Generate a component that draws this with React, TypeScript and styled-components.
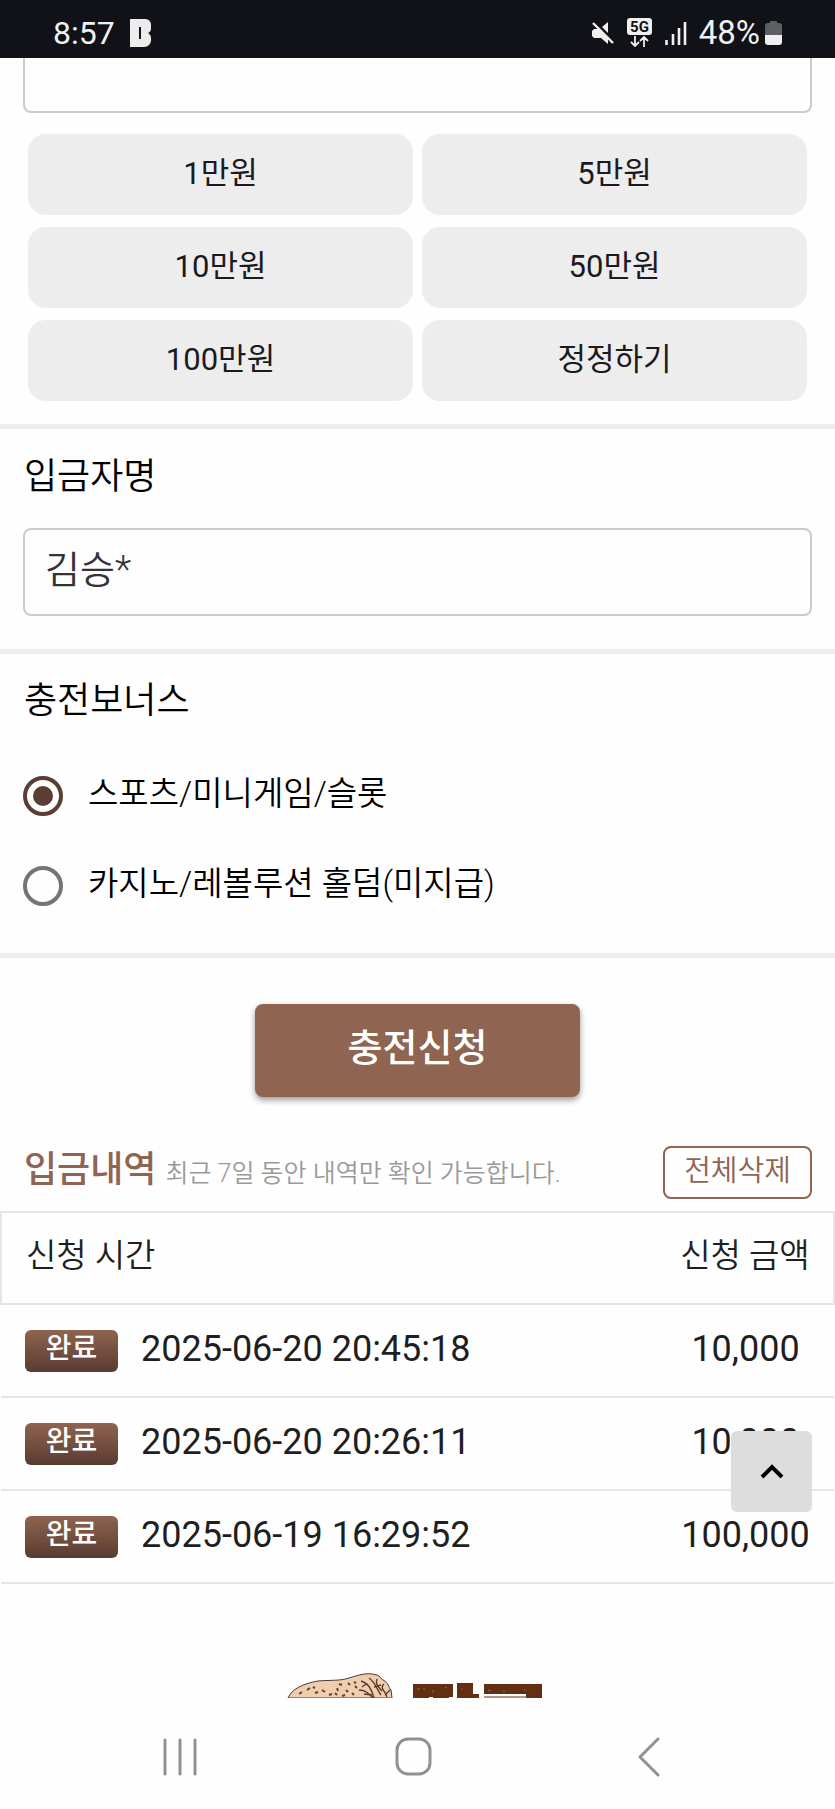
import React from "react";
import styled, { createGlobalStyle } from "styled-components";

const brown = "#8f6450";
const line = "#e5e5e5";

const GlobalStyle = createGlobalStyle`
  * { box-sizing: border-box; }
  body {
    margin: 0;
    background: #fefefe;
    color: #000;
    font-family: Roboto, "Noto Sans CJK KR", sans-serif;
    font-weight: 350;
  }
  button, input { font: inherit; }
  button { cursor: pointer; }
`;

const Page = styled.div`
  display: flex;
  flex-direction: column;
  min-height: 100vh;
`;

const StatusBar = styled.header`
  display: flex;
  align-items: center;
  justify-content: space-between;
  height: 58px;
  padding: 8px 53px 0;
  background: #111217;
  color: #f0f0f0;
  font-size: 32px;
  font-weight: 400;
  line-height: 40px;
`;

const StatusGroup = styled.div<{ $gap: number }>`
  display: flex;
  align-items: center;
  gap: ${(p) => p.$gap}px;
`;

const BatteryLevel = styled.div`
  display: flex;
  align-items: center;
  gap: 5px;
  font-size: 33px;
`;

const Section = styled.section`
  padding: 0 23px;
  border-bottom: 5px solid #ececec;
`;

const AmountSection = styled(Section)`
  padding-bottom: 23px;
`;

const NameSection = styled(Section)`
  padding-bottom: 33px;
`;

const BonusSection = styled(Section)`
  padding-bottom: 22px;
`;

const TextBox = styled.input`
  display: block;
  width: 100%;
  height: 88px;
  padding: 0 20px 12px;
  border: 2px solid #cbcbcb;
  border-radius: 8px;
  background: #fefefe;
  color: #333;
  font-size: 38px;
  outline: none;
`;

const AmountBox = styled(TextBox)`
  height: 55px;
  border-top: 0;
  border-radius: 0 0 8px 8px;
`;

const AmountGrid = styled.div`
  display: grid;
  grid-template-columns: 1fr 1fr;
  gap: 12px 9px;
  padding: 21px 5px 0;
`;

const AmountButton = styled.button`
  height: 81px;
  padding: 0 0 8px;
  border: 0;
  border-radius: 18px;
  background: #ededed;
  color: #1b1b1f;
  font-size: 31px;
  font-weight: 400;
`;

const Label = styled.label`
  display: block;
  padding: 23px 1px 26px;
  font-size: 36px;
  line-height: 50px;
`;

const BonusFields = styled.fieldset`
  margin: 0;
  padding: 0;
  border: 0;
`;

const BonusTitle = styled.legend`
  padding: 22px 1px 25px;
  font-size: 36px;
  line-height: 50px;
`;

const Option = styled.label`
  display: flex;
  align-items: center;
  gap: 25px;
  height: 90px;
  font-size: 33px;
`;

const OptionText = styled.span`
  padding-bottom: 10px;
`;

const Radio = styled.input`
  appearance: none;
  flex: none;
  display: grid;
  place-items: center;
  width: 40px;
  height: 40px;
  margin: 0;
  border: 4px solid #757575;
  border-radius: 50%;

  &:checked { border-color: #5a3d33; }
  &:checked::before {
    content: "";
    width: 20px;
    height: 20px;
    border-radius: 50%;
    background: #5a3d33;
  }
`;

const SubmitRow = styled.div`
  display: flex;
  justify-content: center;
  padding: 46px 0 49px;
`;

const SubmitButton = styled.button`
  width: 325px;
  height: 93px;
  padding: 0 0 12px;
  border: 0;
  border-radius: 8px;
  background: ${brown};
  box-shadow: 0 3px 6px rgba(0, 0, 0, 0.4);
  color: #fff;
  font-size: 38px;
  font-weight: 500;
`;

const HistoryHead = styled.div`
  display: flex;
  align-items: center;
  justify-content: space-between;
  padding: 0 23px 12px 24px;
`;

const HistoryTitle = styled.div`
  display: flex;
  align-items: baseline;
  gap: 9px;
  padding-bottom: 6px;
`;

const Heading = styled.h2`
  margin: 0;
  color: ${brown};
  font-size: 36px;
  font-weight: 500;
  line-height: 44px;
`;

const Note = styled.span`
  color: #999;
  font-size: 25px;
`;

const ClearButton = styled.button`
  width: 149px;
  height: 53px;
  padding: 0 0 4px;
  border: 2px solid ${brown};
  border-radius: 8px;
  background: #fefefe;
  color: ${brown};
  font-size: 29px;
  line-height: 40px;
`;

const HistoryArea = styled.div`
  position: relative;
`;

const HistoryTable = styled.table`
  width: 100%;
  border-collapse: collapse;
  color: #1f1f1f;
`;

const HeadRow = styled.tr`
  height: 92px;
  border: 2px solid ${line};
`;

const Row = styled.tr`
  height: 93px;
  border-bottom: 2px solid ${line};
`;

const HeadCell = styled.th<{ $amount?: boolean }>`
  width: ${(p) => (p.$amount ? "177px" : "auto")};
  padding: 0 0 10px ${(p) => (p.$amount ? "0" : "24px")};
  font-size: 33px;
  font-weight: 350;
  text-align: ${(p) => (p.$amount ? "center" : "left")};
`;

const TimeCell = styled.td`
  padding: 0 0 0 24px;
`;

const TimeLine = styled.div`
  display: flex;
  align-items: center;
  gap: 23px;
`;

const Time = styled.time`
  padding-bottom: 4px;
  font-size: 36px;
  font-weight: 400;
`;

const AmountCell = styled.td`
  padding: 0 0 4px;
  font-size: 36px;
  font-weight: 400;
  text-align: center;
`;

const Badge = styled.span`
  width: 93px;
  height: 42px;
  border-radius: 6px;
  background: linear-gradient(${brown}, #593b31);
  color: #fff;
  font-size: 28px;
  font-weight: 500;
  line-height: 38px;
  text-align: center;
`;

const TopButton = styled.button`
  position: absolute;
  right: 23px;
  bottom: 72px;
  display: grid;
  place-items: center;
  width: 81px;
  height: 81px;
  padding: 0;
  border: 0;
  border-radius: 6px;
  background: #ddd;
`;

const Footer = styled.footer`
  display: flex;
  align-items: flex-end;
  justify-content: center;
  gap: 20px;
  padding: 89px 6px 0 0;
`;

const NavBar = styled.nav`
  display: flex;
  justify-content: space-around;
  padding: 35px 69px 35px 63px;
`;

const NavButton = styled.button`
  display: grid;
  place-items: center;
  width: 60px;
  height: 48px;
  padding: 0;
  border: 0;
  background: none;
`;

const AppIcon = () => (
  <svg width="22" height="29" viewBox="0 0 22 29" aria-hidden="true">
    <path
      fill="#ececec"
      fillRule="evenodd"
      d="M0 0h15c4 0 6 3 6 6v3c0 3-1 4-3 5 2 1 3 3 3 5v2c0 4-3 7-7 7H0zM9 8v12h2V8z"
    />
  </svg>
);

const MuteIcon = () => (
  <svg width="24" height="24" viewBox="0 0 24 24" aria-hidden="true">
    <path fill="#f0f0f0" d="M17 1v11l-6-6z" />
    <path fill="#f0f0f0" d="M1 10l2-2h5l9 9v6l-7-6H3l-2-2z" />
    <path d="M2 2l20 20" stroke="#f0f0f0" strokeWidth="2.4" />
  </svg>
);

const NetworkIcon = () => (
  <svg width="26" height="30" viewBox="0 0 26 30" aria-hidden="true">
    <rect width="25" height="17" rx="3" fill="#f0f0f0" />
    <text x="12.5" y="14" textAnchor="middle" fontFamily="Roboto" fontSize="15" fontWeight="700" fill="#111217">
      5G
    </text>
    <path d="M8 18v10M4 24l4 4 4-4M17 29V19M13 23l4-4 4 4" fill="none" stroke="#f0f0f0" strokeWidth="1.8" />
  </svg>
);

const SignalIcon = () => (
  <svg width="22" height="23" viewBox="0 0 22 23" aria-hidden="true">
    <path d="M1.500 18v5M8 12v11M14 6v17M20 0v23" stroke="#f0f0f0" strokeWidth="2.6" />
  </svg>
);

const BatteryIcon = () => (
  <svg width="17" height="24" viewBox="0 0 17 24" aria-hidden="true">
    <path fill="#5e5f63" d="M5 0h7v2h2c2 0 3 1 3 3v10H0V5c0-2 1-3 3-3h2z" />
    <path fill="#f0f0f0" d="M0 14h17v7c0 2-1 3-3 3H3c-2 0-3-1-3-3z" />
  </svg>
);

const MascotArt = () => (
  <svg width="106" height="25" viewBox="0 0 106 25" aria-hidden="true">
    <path
      d="M1 25C5 16 15 11 31 8c10-1 23 0 31-3C72 2 80-1 90 2c3 1 4 4 6 5 6 3 5 7 8 10l1 8z"
      fill="#efceb0"
      stroke="#4a3a30"
      strokeWidth="1"
    />
    <path
      d="M20 17l3-2M28 20l3-1M35 17l3 2M42 22l3-1M26 14l2 1M50 15l1 3M52 11l3 1M59 17l2 2M61 10l2 2M68 13l2 2M67 9l2 1M55 23l3-1M12 21l3-2M48 20l2 2M65 20l2 2"
      stroke="#6b4029"
      strokeWidth="2"
    />
    <path
      d="M74 8c7 2 10 7 13 17M82 5c7 5 8 12 12 17M72 17c7 0 10 4 14 8M90 6c-2 6 2 8 5 12M97 11c-5 4 2 8 3 13M79 11l-4 3M87 14l7-2M77 21l8 1M103 17l-5 5"
      fill="none"
      stroke="#5a3a2b"
      strokeWidth="1.4"
    />
  </svg>
);

const WordmarkArt = () => (
  <svg width="129" height="15" viewBox="0 0 129 15" aria-hidden="true">
    <path
      d="M0 1h40v13h-4v1H20v-1h-4v1H0zM44 0h16v11h6v4H44zM71 1h58v14h-16v-4H71z"
      fill="#632f13"
    />
    <path d="M71 14h42" stroke="#632f13" strokeWidth="1" />
    <path d="M4 6h3M11 5v2M20 7v3M32 4l2 1M48 6h2M75 7l3 1M91 7v2M111 7h2" stroke="#b98462" strokeWidth="0.6" />
  </svg>
);

const presets = ["1만원", "5만원", "10만원", "50만원", "100만원", "정정하기"];
const bonuses = ["스포츠/미니게임/슬롯", "카지노/레볼루션 홀덤(미지급)"];
const deposits = [
  { time: "2025-06-20 20:45:18", amount: "10,000" },
  { time: "2025-06-20 20:26:11", amount: "10,000" },
  { time: "2025-06-19 16:29:52", amount: "100,000" },
];

export default function App() {
  return (
    <Page lang="ko">
      <GlobalStyle />
      <StatusBar>
        <StatusGroup $gap={15}>
          <span>8:57</span>
          <AppIcon />
        </StatusGroup>
        <StatusGroup $gap={12}>
          <MuteIcon />
          <NetworkIcon />
          <SignalIcon />
          <BatteryLevel>
            <span>48%</span>
            <BatteryIcon />
          </BatteryLevel>
        </StatusGroup>
      </StatusBar>

      <AmountSection>
        <AmountBox aria-label="충전금액" />
        <AmountGrid>
          {presets.map((p) => (
            <AmountButton key={p} type="button">{p}</AmountButton>
          ))}
        </AmountGrid>
      </AmountSection>

      <NameSection>
        <Label htmlFor="depositor">입금자명</Label>
        <TextBox id="depositor" defaultValue="김승*" />
      </NameSection>

      <BonusSection>
        <BonusFields>
          <BonusTitle>충전보너스</BonusTitle>
          {bonuses.map((b, i) => (
            <Option key={b}>
              <Radio type="radio" name="bonus" defaultChecked={i === 0} />
              <OptionText>{b}</OptionText>
            </Option>
          ))}
        </BonusFields>
      </BonusSection>

      <SubmitRow>
        <SubmitButton type="button">충전신청</SubmitButton>
      </SubmitRow>

      <HistoryHead>
        <HistoryTitle>
          <Heading>입금내역</Heading>
          <Note>최근 7일 동안 내역만 확인 가능합니다.</Note>
        </HistoryTitle>
        <ClearButton type="button">전체삭제</ClearButton>
      </HistoryHead>

      <HistoryArea>
        <HistoryTable>
          <thead>
            <HeadRow>
              <HeadCell scope="col">신청 시간</HeadCell>
              <HeadCell scope="col" $amount>신청 금액</HeadCell>
            </HeadRow>
          </thead>
          <tbody>
            {deposits.map((d) => (
              <Row key={d.time}>
                <TimeCell>
                  <TimeLine>
                    <Badge>완료</Badge>
                    <Time>{d.time}</Time>
                  </TimeLine>
                </TimeCell>
                <AmountCell>{d.amount}</AmountCell>
              </Row>
            ))}
          </tbody>
        </HistoryTable>
        <TopButton type="button" aria-label="맨 위로">
          <svg width="24" height="16" viewBox="0 0 24 16" aria-hidden="true">
            <path d="M2 13L12 3l10 10" fill="none" stroke="#000" strokeWidth="4" />
          </svg>
        </TopButton>
      </HistoryArea>

      <Footer>
        <MascotArt />
        <WordmarkArt />
      </Footer>

      <NavBar>
        <NavButton type="button" aria-label="최근 앱">
          <svg width="34" height="38" viewBox="0 0 34 38" aria-hidden="true">
            <path d="M2 2v34M17 2v34M32 2v34" stroke="#919191" strokeWidth="3" strokeLinecap="round" />
          </svg>
        </NavButton>
        <NavButton type="button" aria-label="홈">
          <svg width="38" height="40" viewBox="0 0 38 40" aria-hidden="true">
            <rect x="2" y="2" width="33" height="35" rx="11" fill="none" stroke="#919191" strokeWidth="3" />
          </svg>
        </NavButton>
        <NavButton type="button" aria-label="뒤로">
          <svg width="22" height="40" viewBox="0 0 22 40" aria-hidden="true">
            <path d="M20 2L2 20l18 18" fill="none" stroke="#919191" strokeWidth="3" strokeLinecap="round" strokeLinejoin="round" />
          </svg>
        </NavButton>
      </NavBar>
    </Page>
  );
}
